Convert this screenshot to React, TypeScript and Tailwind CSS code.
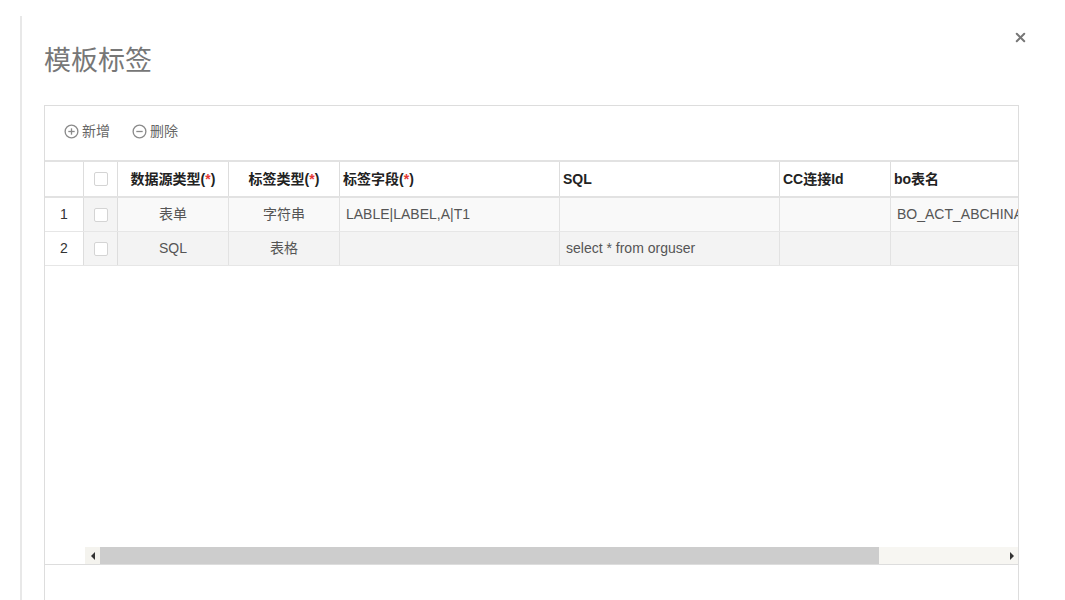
import { X } from "lucide-react";

/* 模板标签 对话框 — 工具栏 + 冻结列表格 + 横向滚动条 */

const COLS = [
  { key: "type", label: "数据源类型", req: true, w: "w-[111px]", align: "center" },
  { key: "tag", label: "标签类型", req: true, w: "w-[111px]", align: "center" },
  { key: "field", label: "标签字段", req: true, w: "w-[220px]", align: "left" },
  { key: "sql", label: "SQL", w: "w-[220px]", align: "left" },
  { key: "cc", label: "CC连接Id", w: "w-[111px]", align: "left" },
  { key: "bo", label: "bo表名", w: "w-[220px]", align: "left" },
];

const ROWS: Record<string, string>[] = [
  { type: "表单", tag: "字符串", field: "LABLE|LABEL,A|T1", sql: "", cc: "", bo: "BO_ACT_ABCHINALIFE_TAG" },
  { type: "SQL", tag: "表格", field: "", sql: "select * from orguser", cc: "", bo: "" },
];

function Checkbox() {
  return <span className="block h-[14px] w-[14px] rounded-[2px] border border-[#d4d4d4] bg-white" />;
}

function CircleIcon({ plus }: { plus?: boolean }) {
  return (
    <svg width="15" height="15" viewBox="0 0 16 16" className="text-[#8a8a8a]">
      <circle cx="8" cy="8" r="6.8" fill="none" stroke="currentColor" strokeWidth="1.4" />
      <path d="M4.6 8h6.8" stroke="currentColor" strokeWidth="1.4" />
      {plus && <path d="M8 4.6v6.8" stroke="currentColor" strokeWidth="1.4" />}
    </svg>
  );
}

export default function App() {
  return (
    <div
      className="relative h-[600px] w-[1065px] overflow-hidden bg-white pl-[20px] pt-[16px] text-[14px] text-[#555]"
      style={{ fontFamily: '"Liberation Sans", "Noto Sans CJK SC", sans-serif' }}
    >
      <button
        type="button"
        className="absolute right-[37px] top-[30px] text-[#777]"
      >
        <X size={15} strokeWidth={3.2} />
      </button>

      <div className="h-[700px] border-l-2 border-[#e8e8e8] pl-[22px]">
        <h1 className="pt-[26px] text-[27px] font-normal leading-[38px] text-[#777]">
          模板标签
        </h1>

        <div className="mt-[25px] w-[975px] border border-[#dddddd]">
          {/* toolbar */}
          <div className="flex h-[54px] items-center gap-[22px] pb-[4px] pl-[19px]">
            <span className="flex items-center gap-[3px] text-[#666]">
              <CircleIcon plus />
              新增
            </span>
            <span className="flex items-center gap-[3px] text-[#666]">
              <CircleIcon />
              删除
            </span>
          </div>

          {/* table */}
          <div className="h-[406px] overflow-hidden border-t-2 border-[#e2e2e2]">
            <div className="flex h-[36px] w-max border-b-2 border-[#e2e2e2] font-bold text-[#222]">
              <div className="w-[39px] border-r border-[#dddddd]" />
              <div className="flex w-[34px] items-center justify-center border-r border-[#dddddd]">
                <Checkbox />
              </div>
              {COLS.map((c) => (
                <div
                  key={c.key}
                  className={`flex items-center border-r border-[#dddddd] ${c.w} ${
                    c.align === "center" ? "justify-center" : "pl-[3px]"
                  }`}
                >
                  {c.label}
                  {c.req && (
                    <span>
                      (<span className="text-[#e53935]">*</span>)
                    </span>
                  )}
                </div>
              ))}
            </div>

            {ROWS.map((r, i) => (
              <div
                key={i}
                className={`flex h-[34px] w-max border-b border-[#e6e6e6] ${
                  i === 0 ? "bg-[#f9f9f9]" : "bg-[#f3f3f3]"
                }`}
              >
                <div className="flex w-[39px] items-center justify-center border-r border-[#dddddd] bg-white text-[#333]">
                  {i + 1}
                </div>
                <div className="flex w-[34px] items-center justify-center border-r border-[#dddddd] bg-[#f4f4f4]">
                  <Checkbox />
                </div>
                {COLS.map((c) => (
                  <div
                    key={c.key}
                    className={`flex items-center overflow-hidden whitespace-nowrap border-r border-[#e2e2e2] ${c.w} ${
                      c.align === "center" ? "justify-center" : "pl-[6px]"
                    }`}
                  >
                    {r[c.key]}
                  </div>
                ))}
              </div>
            ))}

            <div className="h-[281px]" />

            {/* horizontal scrollbar */}
            <div className="flex h-[18px] border-b border-[#dddddd]">
              <div className="w-[40px] bg-white" />
              <div className="flex w-[15px] items-center justify-center bg-[#f4f3ee]">
                <span className="h-0 w-0 border-y-[4px] border-r-[4px] border-y-transparent border-r-[#333]" />
              </div>
              <div className="w-[779px] bg-[#cdcdcd]" />
              <div className="flex flex-1 items-center justify-end bg-[#f7f6f2] pr-[4px]">
                <span className="h-0 w-0 border-y-[4px] border-l-[4px] border-y-transparent border-l-[#333]" />
              </div>
            </div>
          </div>

          <div className="h-[120px]" />
        </div>
      </div>
    </div>
  );
}
